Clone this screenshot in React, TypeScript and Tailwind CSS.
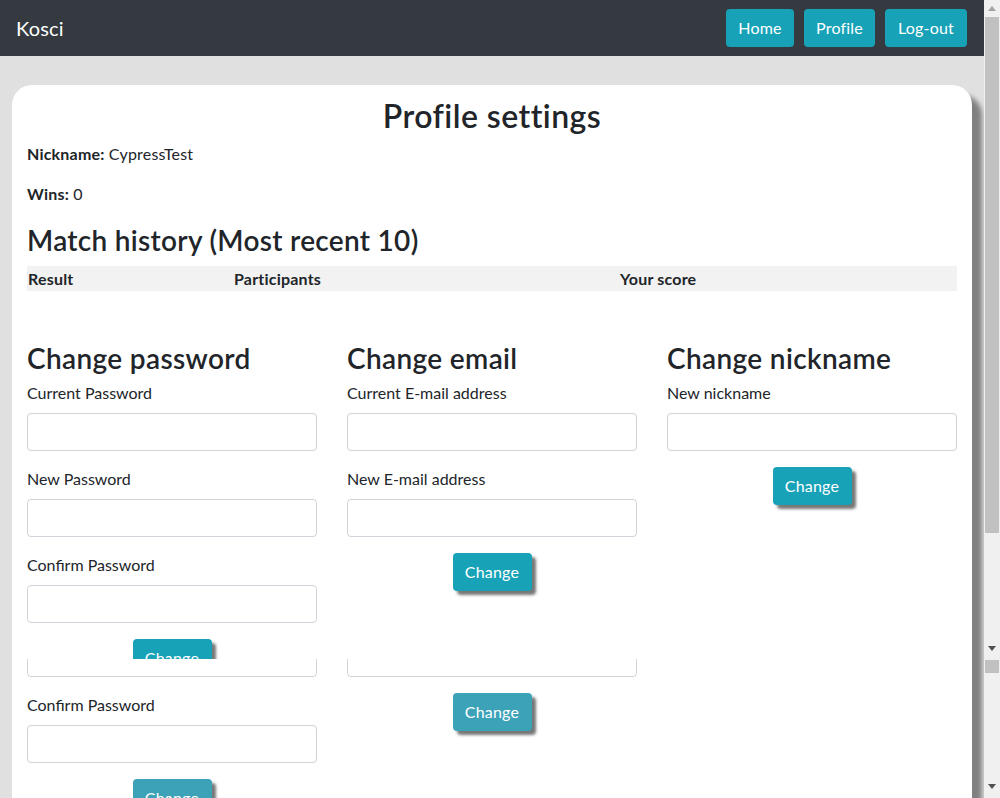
import React from "react";

function ArrowUp({ light }: { light?: boolean }) {
  return (
    <svg width="8" height="5" viewBox="0 0 8 5">
      <path d="M0 5 L4 0 L8 5 Z" fill={light ? "#a3a3a3" : "#505050"} />
    </svg>
  );
}

function ArrowDown() {
  return (
    <svg width="8" height="5" viewBox="0 0 8 5">
      <path d="M0 0 L8 0 L4 5 Z" fill="#505050" />
    </svg>
  );
}

function TopScrollbar() {
  return (
    <div className="flex h-full w-[16px] flex-col bg-[#f0f0f0]">
      <div className="flex h-[17px] items-center justify-center">
        <ArrowUp light />
      </div>
      <div className="mx-[1px] h-[516px] bg-[#c1c1c1]" />
      <div className="flex-1" />
      <div className="flex h-[18px] items-center justify-center pb-[3px]">
        <ArrowDown />
      </div>
    </div>
  );
}

function BottomScrollbar() {
  return (
    <div className="flex h-full w-[16px] flex-col bg-[#f0f0f0]">
      <div className="mx-[1px] mt-[1px] h-[13px] bg-[#c1c1c1]" />
      <div className="flex-1" />
      <div className="flex h-[17px] items-center justify-center pb-[6px]">
        <ArrowDown />
      </div>
    </div>
  );
}

function Field({ label }: { label: string }) {
  return (
    <div className="mb-4">
      <div className="mb-2 text-[16px] leading-[24px] text-[#212529]">{label}</div>
      <div className="h-[38px] w-full rounded-[4px] border border-[#ced4da] bg-white" />
    </div>
  );
}

function ChangeButton({ lower }: { lower?: boolean }) {
  return (
    <div className="flex justify-center">
      <button
        className={
          "h-[38px] w-[79px] rounded-[4px] text-[16px] tracking-[0.2px] text-white shadow-[4px_4px_3px_#777] " +
          (lower ? "bg-[#3ba2b8]" : "bg-[#17a2b8]")
        }
      >
        Change
      </button>
    </div>
  );
}

function Main({ lower }: { lower?: boolean }) {
  return (
    <div className="bg-[#e0e0e0] pt-[29px]">
      <div className="mx-auto w-[960px] rounded-t-[20px] bg-white px-[15px] pt-[12px] pb-[200px] shadow-[10px_10px_5px_gray]">
        <h2 className="text-center text-[32px] font-semibold leading-[38px] tracking-[0.45px] text-[#212529]">
          Profile settings
        </h2>
        <p className="mt-[7px] text-[16px] leading-[24px] tracking-[0.2px] text-[#212529]">
          <b className="font-bold">Nickname:</b> CypressTest
        </p>
        <p className="mt-4 text-[16px] leading-[24px] tracking-[0.2px] text-[#212529]">
          <b className="font-bold">Wins:</b> 0
        </p>
        <h3 className="mt-[17px] text-[28px] font-semibold leading-[34px] tracking-[0.3px] text-[#212529]">
          Match history (Most recent 10)
        </h3>
        <div className="mt-[9px] grid h-[25px] grid-cols-[206px_386px_1fr] items-center bg-[#f2f2f2] pl-[1px] text-[16px] font-bold tracking-[0.2px] text-[#212529]">
          <div>Result</div>
          <div>Participants</div>
          <div>Your score</div>
        </div>
        <div className="mx-[-15px] mt-[50px] grid grid-cols-3">
          <div className="px-[15px]">
            <h3 className="mb-[6px] text-[28px] font-semibold leading-[34px] tracking-[0.35px] text-[#212529]">
              Change password
            </h3>
            <Field label="Current Password" />
            <Field label="New Password" />
            <Field label="Confirm Password" />
            <ChangeButton lower={lower} />
          </div>
          <div className="px-[15px]">
            <h3 className="mb-[6px] text-[28px] font-semibold leading-[34px] tracking-[0.35px] text-[#212529]">
              Change email
            </h3>
            <Field label="Current E-mail address" />
            <Field label="New E-mail address" />
            <ChangeButton lower={lower} />
          </div>
          <div className="px-[15px]">
            <h3 className="mb-[6px] text-[28px] font-semibold leading-[34px] tracking-[0.35px] text-[#212529]">
              Change nickname
            </h3>
            <Field label="New nickname" />
            <ChangeButton lower={lower} />
          </div>
        </div>
      </div>
    </div>
  );
}

function NavButton({ children, w }: { children: React.ReactNode; w: string }) {
  return (
    <button className={"h-[38px] rounded-[4px] bg-[#17a2b8] text-[16px] tracking-[0.2px] text-white " + w}>
      {children}
    </button>
  );
}

export default function App() {
  return (
    <div className="h-[798px] w-[1000px] overflow-hidden bg-[#e0e0e0] font-[Lato,sans-serif]">
      <div className="flex h-[659px] overflow-hidden">
        <div className="flex-1 overflow-hidden">
          <nav className="flex h-[56px] items-center justify-between bg-[#343a40] pl-4 pr-[17px]">
            <span className="text-[20px] tracking-[0.2px] text-white">Kosci</span>
            <div className="flex gap-[10px]">
              <NavButton w="w-[68px]">Home</NavButton>
              <NavButton w="w-[71px]">Profile</NavButton>
              <NavButton w="w-[82px]">Log-out</NavButton>
            </div>
          </nav>
          <Main />
        </div>
        <TopScrollbar />
      </div>
      <div className="flex h-[139px] overflow-hidden">
        <div className="flex-1 overflow-hidden">
          <div className="mt-[-463px]">
            <Main lower />
          </div>
        </div>
        <BottomScrollbar />
      </div>
    </div>
  );
}
